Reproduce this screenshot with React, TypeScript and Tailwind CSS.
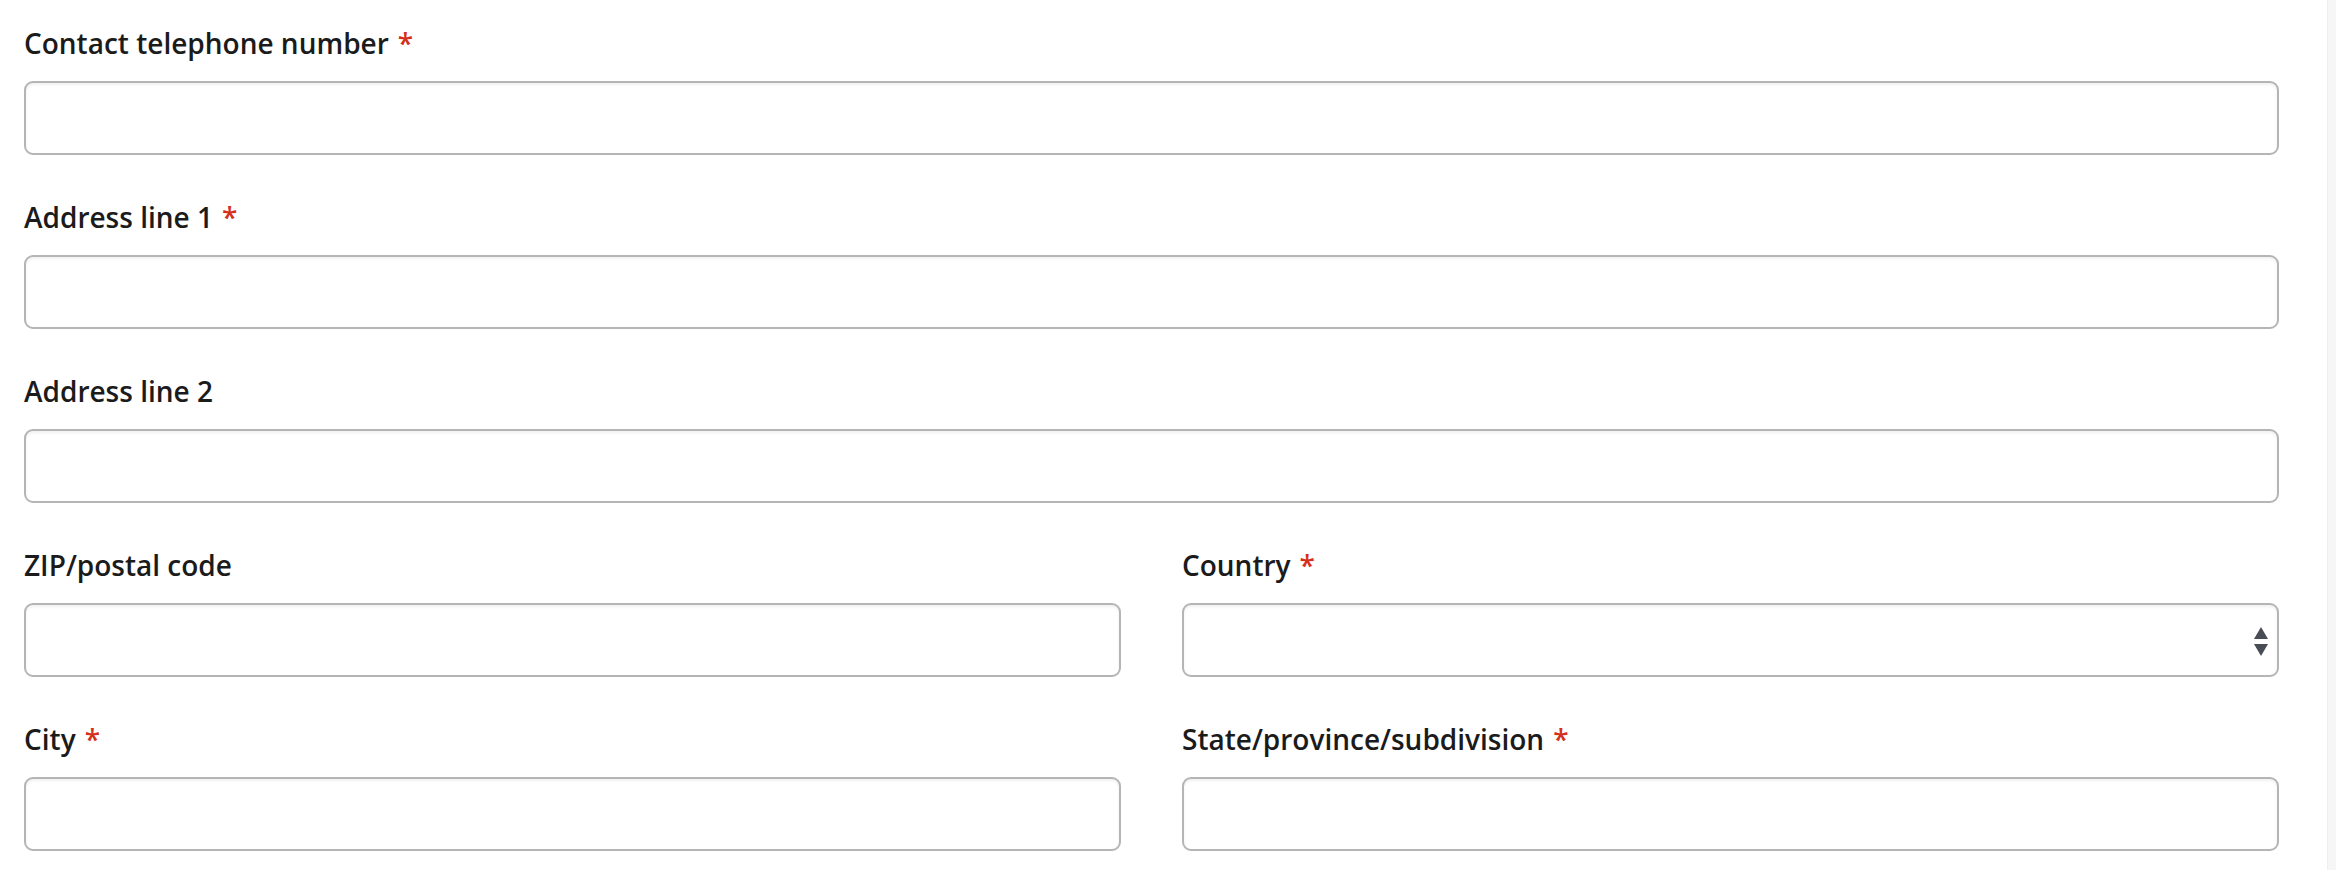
import React from "react";

const Req = () => <span className="text-[#d4301c] ml-[9px]">*</span>;

function Field({ label, required, select }: { label: string; required?: boolean; select?: boolean }) {
  return (
    <div className="flex flex-col">
      <label className="h-[40px] leading-[40px] text-[28px] font-semibold text-[#1b1b1b] tracking-[0px]">
        {label}
        {required && <Req />}
      </label>
      <div className="mt-[18px] relative h-[74px] rounded-[9px] border-2 border-[#b5b5b5] bg-white shadow-[inset_0_2px_3px_rgba(0,0,0,0.06)]">
        {select && (
          <svg className="absolute right-[8px] top-[21px]" width="16" height="31" viewBox="0 0 16 31">
            <polygon points="8,1 15,13 1,13" fill="#474c55" />
            <polygon points="1,18 15,18 8,30" fill="#474c55" />
          </svg>
        )}
      </div>
    </div>
  );
}

export default function App() {
  return (
    <div
      className="flex w-[2336px] h-[870px] bg-white overflow-hidden"
      style={{ fontFamily: '"Open Sans", "Noto Sans", sans-serif' }}
    >
      <div className="flex-1 pl-[24px] pr-[48px] pt-[23px]">
        <div className="grid grid-cols-2 gap-x-[61px] gap-y-[42px]">
          <div className="col-span-2">
            <Field label="Contact telephone number" required />
          </div>
          <div className="col-span-2">
            <Field label="Address line 1" required />
          </div>
          <div className="col-span-2">
            <Field label="Address line 2" />
          </div>
          <Field label="ZIP/postal code" />
          <Field label="Country" required select />
          <Field label="City" required />
          <Field label="State/province/subdivision" required />
        </div>
      </div>
      <div className="w-[9px] h-full bg-[#f6f6f6] border-l border-[#efefef]" />
    </div>
  );
}
